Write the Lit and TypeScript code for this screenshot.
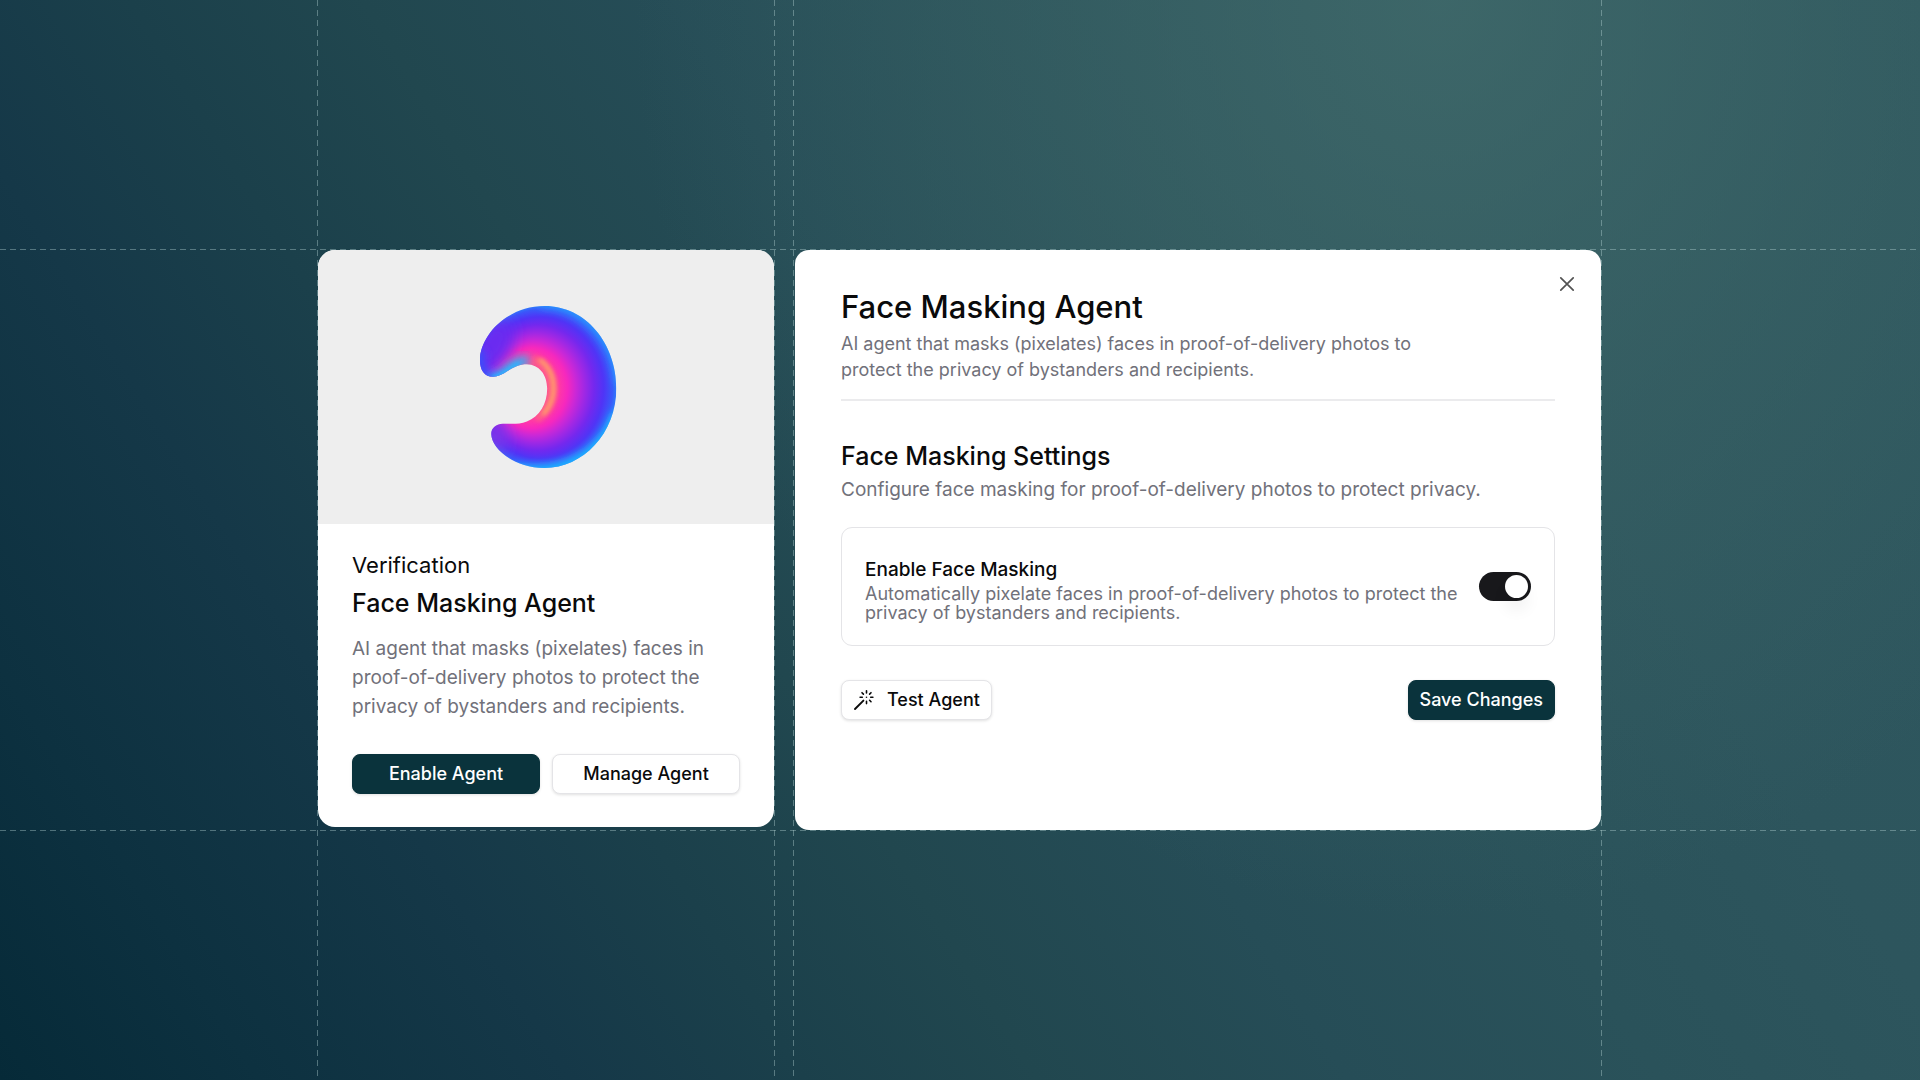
import { LitElement, html, css, svg } from "lit";
import { customElement, state } from "lit/decorators.js";

const font = css`
  :host {
    font-family: Inter, "Liberation Sans", sans-serif;
    color: #0a0a0b;
  }
  h1, h2, h3, p {
    margin: 0;
    font-weight: 500;
  }
  * {
    box-sizing: border-box;
  }
`;

const buttons = css`
  .button {
    display: flex;
    align-items: center;
    justify-content: center;
    gap: 12px;
    height: 40px;
    padding: 0 11px;
    border: 1px solid #e4e4e7;
    border-radius: 8px;
    background: #fff;
    color: #0a0a0b;
    font: 500 18px/24px Inter, "Liberation Sans", sans-serif;
    white-space: nowrap;
    box-shadow: 0 1px 3px rgb(0 0 0 / 0.12);
    cursor: pointer;
  }
  .button.primary {
    border-color: #0a333c;
    background: #0a333c;
    color: #fff;
  }
`;

@customElement("agent-mark")
export class AgentMark extends LitElement {
  static styles = css`
    :host {
      display: block;
      width: 31%;
    }
    .mark {
      display: block;
      width: 100%;
    }
  `;

  render() {
    return svg`<svg class="mark" viewBox="106 107 425 487" aria-hidden="true">
      <defs>
        <clipPath id="shape">
          <path d="M121 270C121 195 203 107 315 107C440 107 531 220 531 355C531 490 430 594 315 594C222 594 155 535 155 492C155 475 167 462 190 461C215 460 236 464 262 454C300 440 323 402 323 355C323 312 298 283 262 282C240 282 225 289 205 302C189 313 175 320 160 320C135 320 121 300 121 270Z"/>
        </clipPath>
        <radialGradient id="fill" gradientUnits="userSpaceOnUse" gradientTransform="translate(312 352) scale(0.9 1)" cx="0" cy="0" r="250" fx="-60" fy="2" fr="64">
          <stop offset="0" stop-color="#ff5a8c"/>
          <stop offset="0.2" stop-color="#ff38a8"/>
          <stop offset="0.31" stop-color="#f628be"/>
          <stop offset="0.42" stop-color="#cc28d6"/>
          <stop offset="0.54" stop-color="#a028e4"/>
          <stop offset="0.67" stop-color="#7428ee"/>
          <stop offset="0.8" stop-color="#5034f6"/>
          <stop offset="0.92" stop-color="#3a58fa"/>
          <stop offset="1" stop-color="#2c88fc"/>
        </radialGradient>
        <filter id="wide" x="-100%" y="-100%" width="300%" height="300%">
          <feGaussianBlur stdDeviation="24"/>
        </filter>
        <filter id="soft" x="-50%" y="-50%" width="200%" height="200%">
          <feGaussianBlur stdDeviation="12"/>
        </filter>
        <filter id="fine" x="-50%" y="-50%" width="200%" height="200%">
          <feGaussianBlur stdDeviation="6"/>
        </filter>
      </defs>
      <g clip-path="url(#shape)">
        <rect x="100" y="90" width="450" height="520" fill="url(#fill)"/>
        <ellipse cx="160" cy="225" rx="52" ry="90" fill="#6a2cf0" transform="rotate(28 160 225)" filter="url(#wide)"/>
        <ellipse cx="165" cy="500" rx="30" ry="54" fill="#8434e6" transform="rotate(-20 165 500)" filter="url(#wide)"/>
        <path d="M118 240C112 340 165 345 200 318" fill="none" stroke="#3a50fa" stroke-width="34" filter="url(#soft)"/>
        <path d="M148 326C182 326 200 300 224 284C240 274 254 272 266 272" fill="none" stroke="#28b0ff" stroke-width="30" filter="url(#soft)"/>
        <path d="M160 326C190 322 210 292 240 280" fill="none" stroke="#28b8ff" stroke-width="12" filter="url(#fine)"/>
        <path d="M282 266C318 276 342 310 342 355C342 398 322 430 290 448" fill="none" stroke="#ff7a72" stroke-width="22" opacity="0.5" filter="url(#fine)"/>
        <path d="M300 268C332 290 343 325 342 360C341 392 330 412 310 434" fill="none" stroke="#ffb062" stroke-width="11" opacity="0.9" filter="url(#fine)"/>
        <path d="M300 102C410 100 524 190 538 340" fill="none" stroke="#289cff" stroke-width="18" filter="url(#soft)"/>
        <path d="M230 596C390 616 490 540 530 430" fill="none" stroke="#18c4ff" stroke-width="24" filter="url(#soft)"/>
      </g>
    </svg>`;
  }
}

@customElement("agent-card")
export class AgentCard extends LitElement {
  static styles = [
    font,
    buttons,
    css`
      :host {
        display: block;
      }
      .card {
        overflow: hidden;
        border-radius: 17px;
        background: #fff;
      }
      .media {
        display: flex;
        align-items: center;
        justify-content: center;
        aspect-ratio: 5 / 3;
        background: #eee;
      }
      .body {
        padding: 26px 34px 33px;
      }
      .category {
        font-size: 22px;
        font-weight: 400;
        line-height: 30px;
      }
      .title {
        margin-top: 6px;
        font-size: 25px;
        line-height: 34px;
      }
      .description {
        margin-top: 14px;
        color: #71717a;
        font-size: 19px;
        font-weight: 400;
        line-height: 29px;
      }
      .actions {
        display: grid;
        grid-template-columns: 1fr 1fr;
        gap: 12px;
        margin-top: 33px;
      }
    `,
  ];

  render() {
    return html`
      <article class="card">
        <div class="media"><agent-mark></agent-mark></div>
        <div class="body">
          <p class="category">Verification</p>
          <h2 class="title">Face Masking Agent</h2>
          <p class="description">
            AI agent that masks (pixelates) faces in proof-of-delivery photos to
            protect the privacy of bystanders and recipients.
          </p>
          <div class="actions">
            <button class="button primary" type="button">Enable Agent</button>
            <button class="button" type="button">Manage Agent</button>
          </div>
        </div>
      </article>
    `;
  }
}

@customElement("agent-settings")
export class AgentSettings extends LitElement {
  @state() private masking = true;

  static styles = [
    font,
    buttons,
    css`
      :host {
        display: block;
      }
      .panel {
        display: flex;
        flex-direction: column;
        height: 100%;
        padding: 20px 46px 110px;
        border-radius: 14px;
        background: #fff;
      }
      .header {
        display: flex;
        justify-content: space-between;
        padding-bottom: 16px;
        border-bottom: 2px solid #ebebed;
      }
      .heading {
        padding-top: 16px;
      }
      .title {
        font-size: 31px;
        line-height: 42px;
      }
      .summary {
        max-width: 600px;
        margin-top: 3px;
        color: #71717a;
        font-size: 18px;
        font-weight: 400;
        line-height: 26px;
      }
      .close {
        display: flex;
        align-items: center;
        justify-content: center;
        width: 28px;
        height: 28px;
        margin-right: -26px;
        padding: 0;
        border: 0;
        background: none;
        color: #525252;
        cursor: pointer;
      }
      .section-title {
        margin-top: 38px;
        font-size: 25px;
        line-height: 34px;
      }
      .section-text {
        margin-top: 4px;
        color: #71717a;
        font-size: 19px;
        font-weight: 400;
        line-height: 26px;
      }
      .option {
        display: flex;
        align-items: center;
        justify-content: space-between;
        gap: 12px;
        margin-top: 24px;
        padding: 23px;
        border: 1px solid #e4e4e7;
        border-radius: 11px;
      }
      .option-label {
        padding-top: 6px;
      }
      .option-title {
        display: block;
        font-size: 19px;
        font-weight: 500;
        line-height: 26px;
      }
      .option-text {
        max-width: 600px;
        margin-top: 1px;
        color: #71717a;
        font-size: 18px;
        font-weight: 400;
        line-height: 19px;
      }
      .switch {
        appearance: none;
        flex: none;
        display: flex;
        align-items: center;
        width: 52px;
        height: 29px;
        margin: 0;
        padding: 3px;
        border-radius: 15px;
        background: #d4d4d8;
        cursor: pointer;
      }
      .switch::before {
        content: "";
        width: 23px;
        height: 23px;
        border-radius: 50%;
        background: #fff;
        box-shadow: 0 12px 16px rgb(0 0 0 / 0.06);
      }
      .switch:checked {
        justify-content: flex-end;
        background: #18181b;
      }
      .actions {
        display: flex;
        justify-content: space-between;
        margin-top: 34px;
      }
    `,
  ];

  private toggle(event: Event) {
    this.masking = (event.target as HTMLInputElement).checked;
  }

  render() {
    return html`
      <section class="panel">
        <header class="header">
          <div class="heading">
            <h1 class="title">Face Masking Agent</h1>
            <p class="summary">
              AI agent that masks (pixelates) faces in proof-of-delivery photos
              to protect the privacy of bystanders and recipients.
            </p>
          </div>
          <button class="close" type="button" aria-label="Close">
            <svg width="16" height="16" viewBox="0 0 16 16" fill="none" stroke="currentColor" stroke-width="1.7" stroke-linecap="round">
              <path d="M1.8 1.8L14.2 14.2M14.2 1.8L1.8 14.2" />
            </svg>
          </button>
        </header>
        <h2 class="section-title">Face Masking Settings</h2>
        <p class="section-text">
          Configure face masking for proof-of-delivery photos to protect privacy.
        </p>
        <div class="option">
          <div class="option-label">
            <label class="option-title" for="masking">Enable Face Masking</label>
            <p class="option-text" id="masking-text">
              Automatically pixelate faces in proof-of-delivery photos to
              protect the privacy of bystanders and recipients.
            </p>
          </div>
          <input
            class="switch"
            id="masking"
            type="checkbox"
            role="switch"
            aria-describedby="masking-text"
            .checked=${this.masking}
            @change=${this.toggle}
          />
        </div>
        <div class="actions">
          <button class="button" type="button">
            <svg width="22" height="22" viewBox="0 0 22 22" fill="none" stroke="currentColor" stroke-width="1.6" stroke-linecap="round" aria-hidden="true">
              <path d="M2 20L10.4 11.6" stroke-width="1.9" />
              <path d="M13.5 1.8V4M13.5 12.4V14.6M7.1 8.2H9.3M17.7 8.2H19.9M9 3.7L10.4 5.1M16.6 11.3L18 12.7M18 3.7L16.6 5.1M13.5 8.2V8.3" />
            </svg>
            Test Agent
          </button>
          <button class="button primary" type="button">Save Changes</button>
        </div>
      </section>
    `;
  }
}

@customElement("app-root")
export class AppRoot extends LitElement {
  static styles = css`
    :host {
      display: block;
    }
    .page {
      display: grid;
      grid-template-columns: 318fr 456fr 21px 806fr 319fr;
      grid-template-rows: 1fr auto 1fr;
      min-height: 100vh;
      overflow: hidden;
      background:
        radial-gradient(ellipse 42% 85% at 75% 0%, rgb(66 108 108 / 0.75), rgb(62 103 104 / 0.42) 50%, rgb(50 90 96 / 0) 100%),
        linear-gradient(58deg, #062a38 0%, #0d3140 10%, #153848 22%, #1b404b 31%, #21474f 40%, #264d57 52%, #2a525a 64%, #2d555d 76%, #2f585f 100%);
    }
    .guide {
      --dash: rgb(190 220 220 / 0.38);
    }
    .vertical {
      grid-row: 1 / -1;
      width: 1px;
      background: repeating-linear-gradient(180deg, var(--dash) 0 6px, transparent 6px 10px);
    }
    .horizontal {
      grid-column: 1 / -1;
      height: 1px;
      background: repeating-linear-gradient(90deg, var(--dash) 0 6px, transparent 6px 10px);
    }
    .before-card {
      grid-column: 1;
      justify-self: end;
    }
    .after-card {
      grid-column: 3;
      justify-self: start;
    }
    .before-panel {
      grid-column: 3;
      justify-self: end;
      margin-right: 1px;
    }
    .after-panel {
      grid-column: 5;
      justify-self: start;
    }
    .above {
      grid-row: 1;
      align-self: end;
    }
    .below {
      grid-row: 3;
      align-self: start;
    }
    .card {
      grid-area: 2 / 2;
      align-self: start;
    }
    .panel {
      grid-area: 2 / 4;
    }
  `;

  render() {
    return html`
      <main class="page">
        <div class="guide vertical before-card"></div>
        <div class="guide vertical after-card"></div>
        <div class="guide vertical before-panel"></div>
        <div class="guide vertical after-panel"></div>
        <div class="guide horizontal above"></div>
        <div class="guide horizontal below"></div>
        <agent-card class="card"></agent-card>
        <agent-settings class="panel"></agent-settings>
      </main>
    `;
  }
}
